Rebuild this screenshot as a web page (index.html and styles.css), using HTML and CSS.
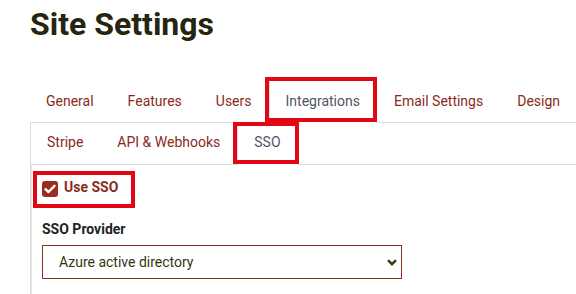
FILE: index.html
```html
<!DOCTYPE html>
<html>
<head>
<meta charset="utf-8">
<link rel="stylesheet" href="styles.css">
</head>
<body>
<div class="page">
  <h1 class="title">Site Settings</h1>
  <nav class="tabs">
    <a class="tab">General</a>
    <a class="tab">Features</a>
    <a class="tab">Users</a>
    <a class="tab active marked-outer">Integrations</a>
    <a class="tab">Email Settings</a>
    <a class="tab">Design</a>
  </nav>
  <div class="panel">
    <nav class="tabs inner">
      <a class="tab">Stripe</a>
      <a class="tab">API &amp; Webhooks</a>
      <a class="tab active marked-inner">SSO</a>
    </nav>
    <div class="content">
      <label class="check-row">
        <span class="checkbox">
          <svg width="12" height="10" viewBox="0 0 12 10"><polyline points="1.5,5.2 4.5,8 10.5,1.8" fill="none" stroke="#fff" stroke-width="2.4" stroke-linecap="round" stroke-linejoin="round"/></svg>
        </span>
        <span class="check-label">Use SSO</span>
      </label>
      <div class="field-label">SSO Provider</div>
      <div class="select-wrap">
        <select class="select">
          <option>Azure active directory</option>
        </select>
        <svg class="chevron" width="10" height="7" viewBox="0 0 10 7"><polyline points="1,1.2 5,5.2 9,1.2" fill="none" stroke="#3a3a12" stroke-width="2.4"/></svg>
      </div>
    </div>
  </div>
</div>
</body>
</html>
```
FILE: styles.css
```css
html, body {
  margin: 0;
  padding: 0;
  background: #fff;
  overflow: hidden;
}
body {
  font-family: Roboto, "Liberation Sans", sans-serif;
  font-size: 14px;
  line-height: 21px;
}
.page {
  padding-left: 30px;
}
.title {
  margin: 5px 0 0 0;
  font-size: 32px;
  line-height: 38px;
  font-weight: 700;
  color: #262610;
}
.tabs {
  display: flex;
  margin-top: 37px;
  border-bottom: 1px solid #dcdcdc;
}
.tab {
  display: block;
  position: relative;
  padding: 10px 16px;
  border: 1px solid transparent;
  margin-bottom: -1px;
  color: #8a2a1c;
  white-space: nowrap;
}
.tab:first-child {
  margin-left: -1px;
}
.tab.active {
  color: #4f5666;
  border-color: #dee2e6 #dee2e6 #fff;
}
.panel {
  border-left: 1px solid #dcdcdc;
}
.tabs.inner {
  margin-top: 0;
}
.tabs.inner .tab {
  padding: 8px 16px 11px;
}
.marked-outer::after {
  content: "";
  position: absolute;
  left: -5px;
  top: -4px;
  right: -1px;
  bottom: 0;
  border: 4px solid #e30613;
}
.marked-inner::after {
  content: "";
  position: absolute;
  left: -5px;
  top: -2px;
  right: -2px;
  bottom: 0;
  border: 4px solid #e30613;
}
.content {
  border-left: 1px solid #e4e4e4;
  padding: 12px 0 20px 10px;
}
.check-row {
  position: relative;
  display: flex;
  align-items: flex-start;
  width: fit-content;
}
.check-row::after {
  content: "";
  position: absolute;
  left: -9px;
  top: -6px;
  width: 102px;
  height: 37px;
  border: 4px solid #e30613;
  box-sizing: border-box;
}
.checkbox {
  width: 16px;
  height: 16px;
  margin-top: 4px;
  margin-right: 6px;
  border-radius: 3px;
  background: #9a2c20;
  display: flex;
  align-items: center;
  justify-content: center;
}
.check-label {
  font-weight: 700;
  color: #8a2a1c;
}
.field-label {
  margin-top: 21px;
  font-weight: 700;
  color: #222;
}
.select-wrap {
  position: relative;
  margin-top: 5px;
  width: 360px;
}
.select {
  display: block;
  width: 360px;
  height: 34px;
  box-sizing: border-box;
  margin: 0;
  padding: 0 30px 0 16px;
  border: 1px solid #8e2e22;
  border-radius: 0;
  background: #fff;
  font-family: Roboto, "Liberation Sans", sans-serif;
  font-size: 14px;
  color: #34340e;
  appearance: none;
  -webkit-appearance: none;
}
.chevron {
  position: absolute;
  right: 5px;
  top: 14px;
}
```
